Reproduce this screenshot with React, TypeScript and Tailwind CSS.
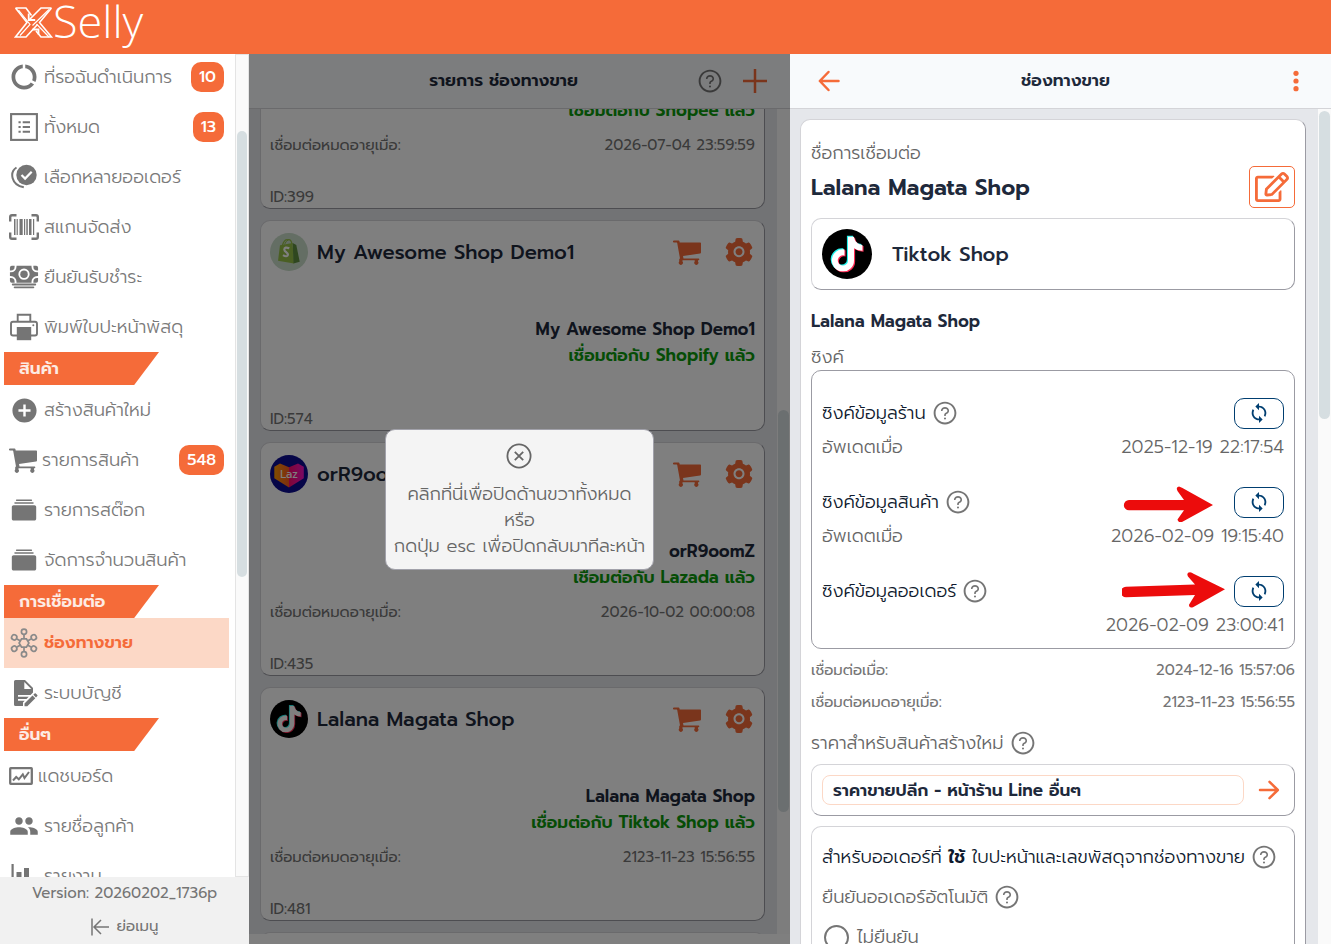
import React from "react";
import { MdDataUsage, MdPeople, MdSync, MdAddCircle } from "react-icons/md";
import { IoIosAlbums } from "react-icons/io";
import { IoCash } from "react-icons/io5";
import { AiFillSetting, AiOutlineQuestionCircle } from "react-icons/ai";
import { FaRegEdit, FaTiktok } from "react-icons/fa";

/* ---------- Icons ---------- */

function CartIcon() {
  return (
    <svg viewBox="0 -1 28 26" className="h-[26px] w-7" fill="currentColor" aria-hidden="true">
      <path d="M0.8 0.6h4.4c.7 0 1.2.4 1.3 1l.2.9h20.300c.6 0 1 .4 1 1v8.900c0 .6-.4 1-.9 1.100L10 16.100l.5 2.400h14.800c.6 0 1 .4 1 .9s-.4.9-1 .9H25v1.200a2.100 2.100 0 1 1-3.300 0V20.300H9.500v1.200a2.100 2.100 0 1 1-3.300 0v-1.900c0-.5.3-.9.8-1L4.200 3.100 3.800 2.400H.8a.9.9 0 0 1 0-1.800z" />
    </svg>
  );
}

function ListBoxIcon() {
  return (
    <svg viewBox="0 0 28 28" className="size-7" fill="currentColor" aria-hidden="true">
      <rect x="1.100" y="1.100" width="25.800" height="25.800" fill="none" stroke="currentColor" strokeWidth="2.100" />
      <path d="M8.500 8.300h2.200v2H8.500zM8.500 13h2.200v2H8.500zM8.500 17.700h2.200v2H8.500zM12.700 8.300H20v2h-7.300zM12.700 13H20v2h-7.300zM12.700 17.700H20v2h-7.300z" />
    </svg>
  );
}

function MultiCheckIcon() {
  return (
    <svg viewBox="0 0 28 28" className="size-7" aria-hidden="true">
      <circle cx="16.500" cy="12" r="10.200" fill="currentColor" />
      <path d="M11.500 12l3.600 3.600 6.600-6.800" stroke="#fff" strokeWidth="2.200" fill="none" />
      <path d="M6.500 4.500C-.5 9 .8 21.800 13.800 24.300" stroke="currentColor" strokeWidth="2" fill="none" />
    </svg>
  );
}

function ScanIcon() {
  return (
    <svg viewBox="0 0 30 26" className="h-[26px] w-[30px] shrink-0" aria-hidden="true">
      <path d="M1.200 7.500V3q0-1.800 1.800-1.800h4.500M22.500 1.200H27q1.800 0 1.800 1.800v4.500M28.800 18.500V23q0 1.800-1.800 1.800h-4.500M7.500 24.800H3q-1.800 0-1.800-1.800v-4.500" fill="none" stroke="currentColor" strokeWidth="2.400" />
      <path d="M5 5h1.500v16H5zM7.600 5h1.200v16H7.600zM10.500 5h3.200v16h-3.200zM15 5h1.200v16H15zM17.300 5h1.500v16h-1.500zM20 5h2.500v16H20zM24 5h1.200v16H24z" fill="currentColor" />
    </svg>
  );
}

function PrinterIcon() {
  return (
    <svg viewBox="0 0 28 28" className="size-7" aria-hidden="true">
      <path d="M7.700 9V1.800h12.600V9" fill="none" stroke="currentColor" strokeWidth="1.900" />
      <path d="M7 22.500H3q-2 0-2-2V10.800q0-2 2-2h22q2 0 2 2v9.700q0 2-2 2h-4" fill="none" stroke="currentColor" strokeWidth="1.900" />
      <rect x="6.800" y="14" width="14.400" height="13.200" fill="currentColor" />
      <circle cx="23.300" cy="12.200" r="1" fill="currentColor" />
    </svg>
  );
}

function HubIcon() {
  const nodes = [0, 60, 120, 180, 240, 300];
  return (
    <svg viewBox="-15 -15 30 30" className="size-[30px]" fill="none" stroke="#8a8a8a" strokeWidth="1.700" aria-hidden="true">
      <path d="M-2.400 -4.200h4.800L4.900 0 2.400 4.200h-4.800L-4.900 0z" />
      {nodes.map((a) => (
        <g key={a} transform={`rotate(${a})`}>
          <circle cx="0" cy="-11.300" r="2.600" />
          <path d="M0 -8.700V-4.400" />
        </g>
      ))}
    </svg>
  );
}

function DocPenIcon() {
  return (
    <svg viewBox="0 0 28 28" className="size-7" aria-hidden="true">
      <path d="M5.500 1H15l8 8v4.500l-2.500 2.500H8v1.800h10.700l-2.200 2.200H8v1.800h6.700L13 23.500V27H5.500Q4 27 4 25.500V2.500Q4 1 5.500 1z" fill="currentColor" />
      <path d="M14.300 3v7h7z" fill="#fff" />
      <path d="M14.500 24.500l8-8 2.800 2.800-8 8h-2.800zM23.300 15.700l1.300-1.300q.6-.5 1.200 0l1.500 1.500q.5.6 0 1.200L26 18.500z" fill="currentColor" />
    </svg>
  );
}

function ChartBoxIcon() {
  return (
    <svg viewBox="0 0 24 18" className="h-[18px] w-6" fill="none" stroke="currentColor" aria-hidden="true">
      <rect x="1.200" y="1.200" width="21.600" height="15.600" rx="0.500" strokeWidth="2.300" />
      <path d="M4 13.500l3.200-3.500 2.600 2.300 4-5 1.700 3.700L20 5" strokeWidth="2" />
    </svg>
  );
}

function ReportIcon() {
  return (
    <svg viewBox="0 0 28 28" className="size-7" fill="currentColor" aria-hidden="true">
      <path d="M1.500 2h2.200v22h23v2.200h-23q-2.200 0-2.200-2.200zM6.500 10h5v12h-5zM14 6h5V22h-5z" />
    </svg>
  );
}

function LogoMark() {
  return (
    <svg viewBox="0 0 39 31" className="mt-[7px] h-[31px] w-[39px]" fill="none" stroke="#fff" strokeWidth="1.600" aria-hidden="true">
      <path d="M1.500 1H12l5.500 7.500M1.500 1L13 15.500 1.500 30H12l11.500-12.500" />
      <path d="M4.500 3L16 17.500 6 28.500" strokeWidth="1.200" />
      <path d="M37.500 1H27L15.500 12.500M37.500 1L25.500 15.500l12 14.500H27l-5-6" />
      <path d="M35 2.500L18.500 18.500M22.500 17L35 30" strokeWidth="1.200" />
      <path d="M14.700 6.500v6.500h6.500M18.500 22.500h6v5" strokeWidth="1.800" />
    </svg>
  );
}

function TiktokBadge({ large = false }: { large?: boolean }) {
  return (
    <svg viewBox="0 0 50 50" className={large ? "size-[50px] shrink-0" : "size-[38px] shrink-0"} aria-hidden="true">
      <circle cx="25" cy="25" r="25" fill="#000" />
      <FaTiktok size={35} x="6.500" y="6.500" color="#25f4ee" />
      <FaTiktok size={35} x="8.700" y="8.500" color="#fe2c55" />
      <FaTiktok size={35} x="7.600" y="7.500" color="#fff" />
    </svg>
  );
}

function ShopifyBadge() {
  return (
    <svg viewBox="0 0 38 38" className="size-[38px] shrink-0" aria-hidden="true">
      <circle cx="19" cy="19" r="19" fill="#c8dcc8" />
      <path d="M12.500 12q2-6 5.500-5.200 3.500-.8 4 5" fill="none" stroke="#95bf47" strokeWidth="1.300" />
      <path d="M14.500 11.500q1.500-4 4-4.700" fill="none" stroke="#95bf47" strokeWidth="1" />
      <path d="M10 12.300l12.500-2.300L24 30.500 8 27.800z" fill="#95bf47" />
      <path d="M22.700 10l3.600 2 3.400 16.800-6.200 1.700z" fill="#5e8e3e" />
      <path d="M19.300 15.300q-4.800-2-5 1.200 0 1.500 2.100 2.800 2.200 1.500 1.100 3.300-1.300 1.500-4.500-.5" fill="none" stroke="#fff" strokeWidth="2.200" />
    </svg>
  );
}

function LazadaBadge() {
  return (
    <svg viewBox="0 0 38 38" className="size-[38px] shrink-0" aria-hidden="true">
      <defs>
        <linearGradient id="lazLeft" x1="0" x2="1"><stop offset="0" stopColor="#ff9a00" /><stop offset="1" stopColor="#ff5a1f" /></linearGradient>
        <linearGradient id="lazRight" x1="0" x2="1"><stop offset="0" stopColor="#ff0a6a" /><stop offset="1" stopColor="#f414c8" /></linearGradient>
      </defs>
      <circle cx="19" cy="19" r="19" fill="#0c0c90" />
      <path d="M19 12.300L10 8.600 4.300 11.800v11.500L19 32.500z" fill="url(#lazLeft)" />
      <path d="M19 12.300l9-3.700 5.800 3.200v11.500L19 32.500z" fill="url(#lazRight)" />
      <text x="19" y="23" textAnchor="middle" fontSize="11" fill="#fff">Laz</text>
    </svg>
  );
}

function ArrowIcon({ back = false }: { back?: boolean }) {
  return (
    <svg viewBox="0 0 22 22" className="size-[22px]" fill="none" stroke="#f56b39" strokeWidth="2.500" strokeLinecap="round" strokeLinejoin="round" aria-hidden="true">
      {back ? <path d="M20.500 11H2M10.500 2L1.800 11l8.700 9" /> : <path d="M2 11h17M11.500 2.800L19.800 11l-8.300 8.200" />}
    </svg>
  );
}

function Help({ className = "" }: { className?: string }) {
  return (
    <button type="button" aria-label="ช่วยเหลือ" className={`shrink-0 text-[#757575] ${className}`}>
      <AiOutlineQuestionCircle className="size-[26px]" />
    </button>
  );
}

/* ---------- Sidebar ---------- */

type Item = { label: string; icon: React.ReactNode; badge?: string; active?: boolean; fit?: boolean };

function MenuItem({ label, icon, badge, active, fit }: Item) {
  return (
    <a
      href="#"
      className={`ml-1 mr-1.5 flex h-[50px] shrink-0 items-center pl-[5px] ${active ? "bg-[#fcd8c6] text-[#f56b39]" : "text-[#7a7a7a]"}`}
    >
      <span className={`flex shrink-0 justify-center text-[#757575] ${fit ? "" : "w-[30px]"}`}>{icon}</span>
      <span className={`ml-[5px] flex-1 whitespace-nowrap ${active ? "text-[17px] font-semibold" : "text-[18px] font-light"}`}>{label}</span>
      {badge && (
        <span className="mr-[5px] flex h-[30px] items-center rounded-[10px] bg-[#f56b39] px-2 text-[16px] font-medium text-white">{badge}</span>
      )}
    </a>
  );
}

function Banner({ children }: { children: React.ReactNode }) {
  return (
    <h2 className="ml-1 flex h-[33px] w-[155px] shrink-0 items-center bg-[#f56b39] pl-[15px] text-[17px] font-semibold text-[#fdebe4] [clip-path:polygon(0_0,100%_0,84%_100%,0_100%)]">
      {children}
    </h2>
  );
}

function Sidebar() {
  return (
    <aside className="flex w-[249px] shrink-0 flex-col">
      <div className="flex min-h-0 flex-1">
        <nav className="flex min-w-0 flex-1 flex-col overflow-hidden bg-white">
          <div className="-mt-0.5 flex flex-col">
            <MenuItem label="ที่รอฉันดำเนินการ" badge="10" icon={<MdDataUsage className="size-[30px]" />} />
            <MenuItem label="ทั้งหมด" badge="13" icon={<ListBoxIcon />} />
            <MenuItem label="เลือกหลายออเดอร์" icon={<MultiCheckIcon />} />
            <MenuItem label="สแกนจัดส่ง" icon={<ScanIcon />} />
            <MenuItem label="ยืนยันรับชำระ" icon={<IoCash className="size-[30px]" />} />
            <MenuItem label="พิมพ์ใบปะหน้าพัสดุ" icon={<PrinterIcon />} />
            <Banner>สินค้า</Banner>
            <MenuItem label="สร้างสินค้าใหม่" icon={<MdAddCircle className="size-[29px]" />} />
            <MenuItem label="รายการสินค้า" badge="548" fit icon={<CartIcon />} />
            <MenuItem label="รายการสต๊อก" icon={<IoIosAlbums className="size-[26px]" />} />
            <MenuItem label="จัดการจำนวนสินค้า" icon={<IoIosAlbums className="size-[26px]" />} />
            <Banner>การเชื่อมต่อ</Banner>
            <MenuItem label="ช่องทางขาย" active icon={<HubIcon />} />
            <MenuItem label="ระบบบัญชี" icon={<DocPenIcon />} />
            <Banner>อื่นๆ</Banner>
            <MenuItem label="แดชบอร์ด" fit icon={<ChartBoxIcon />} />
            <MenuItem label="รายชื่อลูกค้า" icon={<MdPeople className="size-[30px]" />} />
            <MenuItem label="รายงาน" icon={<ReportIcon />} />
          </div>
        </nav>
        <div className="w-3.5 border border-[#e4e4e4] bg-[#fafafa] px-px pt-[76px]">
          <div className="h-[446px] rounded-full bg-[#d6dee1]" />
        </div>
      </div>
      <footer className="flex h-[67px] shrink-0 flex-col items-center bg-[#f1f1f1] text-[#757575]">
        <p className="text-[15px] leading-8">Version: 20260202_1736p</p>
        <button type="button" className="flex h-[37px] items-center gap-2 text-[15px]">
          <svg viewBox="0 0 18 18" className="size-[18px]" fill="none" stroke="currentColor" strokeWidth="1.500" aria-hidden="true">
            <path d="M1 0.500v17M18 9H3M10 2L3 9l7 7" />
          </svg>
          ย่อเมนู
        </button>
      </footer>
    </aside>
  );
}

/* ---------- Channel list ---------- */

const cardBorder = "rounded-[10px] border border-t-[#d4d4d8] border-l-[#d4d4d8] border-r-[#9b9ba3] border-b-[#9b9ba3]";

function ChannelCard({ name, platform, expires, id, logo }: { name: string; platform: string; expires?: string; id: string; logo: React.ReactNode }) {
  return (
    <article className={`mb-[11px] flex flex-col bg-white px-[9px] pt-[11px] ${cardBorder}`}>
      <div className="flex h-10 items-center">
        {logo}
        <h3 className="ml-[9px] flex-1 text-[20px] font-medium text-[#1e293b]">{name}</h3>
        <button type="button" aria-label="ออเดอร์" className="text-[#f56b39]"><CartIcon /></button>
        <button type="button" aria-label="ตั้งค่า" className="ml-[22px] text-[#f56b39]"><AiFillSetting className="size-8" /></button>
      </div>
      <p className="mt-11 text-right text-[17px] font-semibold leading-[26px] text-[#1e293b]">{name}</p>
      <p className="text-right text-[17px] font-semibold leading-[26px] text-[#0c9a0c]">เชื่อมต่อกับ {platform} แล้ว</p>
      {expires && (
        <p className="mt-[11px] flex justify-between text-[15px] leading-[22px] text-[#757575]">
          <span>เชื่อมต่อหมดอายุเมื่อ:</span>
          <span>{expires}</span>
        </p>
      )}
      <p className={`text-[15px] leading-[22px] text-[#757575] ${expires ? "mt-[30px]" : "mt-10"}`}>ID:{id}</p>
    </article>
  );
}

function ChannelList() {
  return (
    <section className="relative flex min-w-0 flex-1 flex-col bg-white">
      <header className="flex h-[55px] shrink-0 items-center border-b border-[#d4d4d8] bg-[#f8fafc] pl-[61px] pr-[23px]">
        <h1 className="flex-1 text-center text-[17px] font-semibold text-[#1e293b]">รายการ ช่องทางขาย</h1>
        <Help />
        <button type="button" aria-label="เพิ่มช่องทางขาย" className="ml-5">
          <svg viewBox="0 0 24 24" className="size-6" stroke="#f56b39" strokeWidth="2.500" aria-hidden="true"><path d="M12 0v24M0 12h24" /></svg>
        </button>
      </header>
      <div className="mb-2.5 flex min-h-0 flex-1 bg-[#e5e7eb]">
        <div className="min-w-0 flex-1 overflow-hidden pl-[11px] pr-3">
          <div className="-mt-[134px]">
            <ChannelCard name="My Shopee Shop" platform="Shopee" expires="2026-07-04 23:59:59" id="399" logo={<ShopifyBadge />} />
            <ChannelCard name="My Awesome Shop Demo1" platform="Shopify" id="574" logo={<ShopifyBadge />} />
            <ChannelCard name="orR9oomZ" platform="Lazada" expires="2026-10-02 00:00:08" id="435" logo={<LazadaBadge />} />
            <ChannelCard name="Lalana Magata Shop" platform="Tiktok Shop" expires="2123-11-23 15:56:55" id="481" logo={<TiktokBadge />} />
            <div className={`h-10 bg-white ${cardBorder}`} />
          </div>
        </div>
        <div className="w-[13px] bg-[#fafafa] px-px pt-[301px]">
          <div className="h-[402px] rounded-full bg-[#d6dee1]" />
        </div>
      </div>
      <div className="absolute inset-0 flex items-center justify-center bg-black/50">
        <button
          type="button"
          className="flex flex-col items-center rounded-[10px] border border-[#a1a1aa] bg-[#f4f4f4] px-2 pb-2.5 pt-[13px] text-[18px] font-light leading-[26px] text-[#666]"
        >
          <svg viewBox="0 0 26 26" className="mb-3 size-[26px]" fill="none" stroke="currentColor" strokeWidth="1.800" aria-hidden="true">
            <circle cx="13" cy="13" r="11.600" />
            <path d="M8.800 8.800l8.400 8.400M17.200 8.800l-8.400 8.400" />
          </svg>
          <span>คลิกที่นี่เพื่อปิดด้านขวาทั้งหมด</span>
          <span>หรือ</span>
          <span>กดปุ่ม esc เพื่อปิดกลับมาทีละหน้า</span>
        </button>
      </div>
    </section>
  );
}

/* ---------- Channel detail ---------- */

function RedArrow({ tilt = false }: { tilt?: boolean }) {
  return (
    <svg viewBox="0 0 104 40" className={`absolute top-1/2 h-10 w-[104px] -translate-y-1/2 ${tilt ? "right-[58px]" : "right-[70px]"}`} fill="#ec0c0c" aria-hidden="true">
      {tilt ? (
        <path d="M4 15.800L73 13.500 66 5.500q-2-4 2-4.300 2 0 3.500 1.500L103 18.200 71 36.300q-4 1.200-4-2.500L73 24 4 26.300a5.200 5.200 0 0 1 0-10.500z" />
      ) : (
        <path d="M19 18H74L67.500 9q-2-4 1.500-4.500l3 1.200L103 23 72 40q-4 1-4.500-2.500L74 28.300H19a5.100 5.100 0 0 1 0-10.300z" />
      )}
    </svg>
  );
}

function SyncRow({ label, time, updated, arrow }: { label: string; time: string; updated?: boolean; arrow?: "straight" | "tilt" }) {
  return (
    <div>
      <div className="relative flex h-8 items-center">
        <span className="text-[18px] font-light text-[#0f1a2e]">{label}</span>
        <Help className="ml-1.5" />
        <button type="button" aria-label={label} className="ml-auto flex h-[31px] w-[50px] items-center justify-center rounded-[10px] border border-[#003e70] text-[#003e70]">
          <MdSync className="size-[22px]" />
        </button>
        {arrow && <RedArrow tilt={arrow === "tilt"} />}
      </div>
      <p className="flex h-9 items-center justify-between text-[18px] font-light text-[#666]">
        <span>{updated && "อัพเดตเมื่อ"}</span>
        <span>{time}</span>
      </p>
    </div>
  );
}

function Detail() {
  return (
    <section className="flex min-w-0 flex-1 flex-col">
      <header className="flex h-[55px] shrink-0 items-center border-b border-[#d4d4d8] bg-[#f8fafc] pl-7 pr-[30px]">
        <button type="button" aria-label="กลับ"><ArrowIcon back /></button>
        <h1 className="flex-1 text-center text-[17px] font-semibold text-[#1e293b]">ช่องทางขาย</h1>
        <button type="button" aria-label="เพิ่มเติม">
          <svg viewBox="0 0 10 22" className="h-[22px] w-2.5" fill="#f56b39" aria-hidden="true">
            <circle cx="5" cy="3.300" r="2.600" /><circle cx="5" cy="11" r="2.600" /><circle cx="5" cy="18.700" r="2.600" />
          </svg>
        </button>
      </header>
      <div className="flex min-h-0 flex-1 bg-[#e5e7eb]">
        <div className="min-w-0 flex-1 overflow-hidden pl-2.5 pr-3 pt-2.5">
          <article className={`bg-white px-2.5 pt-5 ${cardBorder}`}>
            <p className="text-[18px] font-light leading-[26px] text-[#666]">ชื่อการเชื่อมต่อ</p>
            <div className="flex h-[42px] items-center justify-between">
              <h2 className="text-[22px] font-semibold text-[#1e293b]">Lalana Magata Shop</h2>
              <button type="button" aria-label="แก้ไข" className="flex h-[42px] w-[46px] items-center justify-center rounded-[5px] border border-[#f56b39] text-[#f56b39]">
                <FaRegEdit className="size-[34px]" />
              </button>
            </div>
            <div className={`mt-2.5 flex h-[72px] items-center px-2.5 ${cardBorder}`}>
              <TiktokBadge large />
              <span className="ml-5 text-[20px] font-medium text-[#1e293b]">Tiktok Shop</span>
            </div>
            <h3 className="mt-[18px] text-[17px] font-semibold leading-[26px] text-[#1e293b]">Lalana Magata Shop</h3>
            <p className="mt-2.5 text-[18px] font-light leading-[26px] text-[#666]">ซิงค์</p>
            <div className="flex flex-col gap-[21px] rounded-[10px] border border-[#9b9ba3] px-2.5 pb-[5px] pt-[26px]">
              <SyncRow label="ซิงค์ข้อมูลร้าน" time="2025-12-19 22:17:54" updated />
              <SyncRow label="ซิงค์ข้อมูลสินค้า" time="2026-02-09 19:15:40" updated arrow="straight" />
              <SyncRow label="ซิงค์ข้อมูลออเดอร์" time="2026-02-09 23:00:41" arrow="tilt" />
            </div>
            <dl className="pt-[5px] text-[15px] leading-8 text-[#757575]">
              <div className="flex justify-between"><dt>เชื่อมต่อเมื่อ:</dt><dd>2024-12-16 15:57:06</dd></div>
              <div className="flex justify-between"><dt>เชื่อมต่อหมดอายุเมื่อ:</dt><dd>2123-11-23 15:56:55</dd></div>
            </dl>
            <div className="mt-3 flex h-[26px] items-center text-[18px] font-light text-[#666]">
              <label htmlFor="price">ราคาสำหรับสินค้าสร้างใหม่</label>
              <Help className="ml-1.5" />
            </div>
            <div className={`mt-2 flex h-[52px] items-center pl-2.5 pr-3.5 ${cardBorder}`}>
              <input
                id="price"
                readOnly
                value="ราคาขายปลีก - หน้าร้าน Line อื่นๆ"
                className="h-[30px] min-w-0 flex-1 rounded-lg border border-[#fcd8c6] px-2.5 text-[17px] font-semibold text-[#1e293b] outline-none"
              />
              <button type="button" aria-label="เลือกราคา" className="ml-3.5"><ArrowIcon /></button>
            </div>
            <fieldset className={`mt-2.5 h-[200px] px-2.5 pt-4 ${cardBorder}`}>
              <div className="flex h-7 items-center text-[18px] font-light text-[#0f1a2e]">
                <p className="whitespace-nowrap">สำหรับออเดอร์ที่ <b className="font-semibold">ใช้</b> ใบปะหน้าและเลขพัสดุจากช่องทางขาย</p>
                <Help className="ml-1.5" />
              </div>
              <div className="mt-3 flex h-7 items-center text-[18px] font-light text-[#666]">
                <span>ยืนยันออเดอร์อัตโนมัติ</span>
                <Help className="ml-1.5" />
              </div>
              <label className="mt-3 flex h-7 items-center gap-2 pl-0.5 text-[18px] font-light text-[#666]">
                <input type="radio" name="auto" className="size-[25px] appearance-none rounded-full border-2 border-[#757575]" />
                ไม่ยืนยัน
              </label>
            </fieldset>
          </article>
        </div>
        <div className="w-[13px] bg-[#fafafa] px-px pt-0.5">
          <div className="h-[308px] rounded-full bg-[#d6dee1]" />
        </div>
      </div>
    </section>
  );
}

export default function App() {
  return (
    <div className="flex h-screen flex-col overflow-hidden font-['Prompt','Noto_Sans_Thai','Noto_Sans',sans-serif]">
      <div className="flex h-[54px] shrink-0 items-start bg-[#f56b39] pl-3.5">
        <LogoMark />
        <span className="font-['Open_Sans','Noto_Sans',sans-serif] text-[45px] font-light leading-[42px] text-white">Selly</span>
      </div>
      <main className="flex min-h-0 flex-1">
        <Sidebar />
        <ChannelList />
        <Detail />
      </main>
    </div>
  );
}
